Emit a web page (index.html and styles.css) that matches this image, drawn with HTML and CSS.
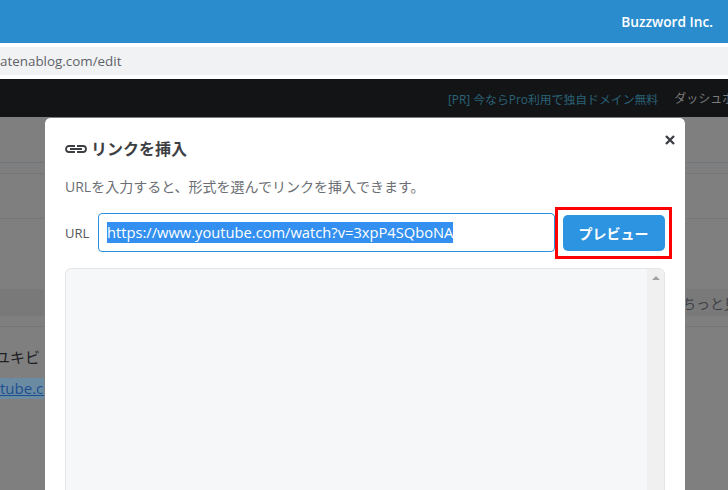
FILE: index.html
```html
<!DOCTYPE html>
<html lang="ja">
<head>
<meta charset="utf-8">
<title>リンクを挿入</title>
<link rel="stylesheet" href="styles.css">
</head>
<body>
<header class="site-bar"><span class="brand">Buzzword Inc.</span></header>
<div class="address-bar"><span class="address">atenablog.com/edit</span></div>
<nav class="admin-bar">
  <a class="promo">[PR] 今ならPro利用で独自ドメイン無料</a>
  <a class="dash">ダッシュボード</a>
</nav>
<main class="backdrop">
  <div class="rule rule-a"></div>
  <div class="rule rule-b"></div>
  <div class="rule rule-c"></div>
  <div class="band"><span class="band-text">ちっと見る</span></div>
  <p class="back-line">ユキビ</p>
  <p class="back-link"><span class="back-selected">tube.com</span></p>
</main>
<section class="modal">
  <button class="close" aria-label="閉じる">
    <svg viewBox="0 0 12 12" width="12" height="12"><path d="M2 2 L10 10 M10 2 L2 10" stroke="#3d3f44" stroke-width="2.4" fill="none"/></svg>
  </button>
  <h2 class="title">
    <svg class="link-icon" viewBox="0 0 22 8" width="22" height="8"><path d="M10 1 H4 a3 3 0 0 0 0 6 H10 M12 1 H18 a3 3 0 0 1 0 6 H12 M5 4 H17" stroke="#3d3f44" stroke-width="1.8" fill="none"/></svg>
    リンクを挿入
  </h2>
  <p class="lead">URLを入力すると、形式を選んでリンクを挿入できます。</p>
  <div class="url-row">
    <label class="url-label">URL</label>
    <div class="url-input"><span class="url-value">https://www.youtube.com/watch?v=3xpP4SQboNA</span></div>
    <div class="highlight"><button class="preview">プレビュー</button></div>
  </div>
  <div class="result">
    <div class="scrollbar"><span class="arrow"></span></div>
  </div>
</section>
</body>
</html>
```
FILE: styles.css
```css
* { box-sizing: border-box; }
html, body { margin: 0; height: 490px; overflow: hidden; }
body {
  position: relative;
  background: #fff;
  font-family: "Open Sans", "Noto Sans CJK JP", sans-serif;
  color: #3d3f44;
}
.site-bar {
  height: 43px;
  background: #2a8ccc;
  display: flex;
  align-items: center;
  justify-content: flex-end;
  padding-right: 15px;
}
.brand { color: #fff; font-size: 13.7px; font-weight: 600; }
.address-bar {
  height: 28px;
  margin: 4px 0;
  background: #f1f2f4;
  display: flex;
  align-items: center;
  overflow: hidden;
}
.address { font-size: 13.4px; color: #5f6368; }
.admin-bar {
  height: 38px;
  background: #131416;
  display: flex;
  align-items: center;
  white-space: nowrap;
  font-size: 12px;
  overflow: hidden;
}
.promo { color: #2a6378; margin-left: 448px; flex: none; font-size: 11.85px; }
.dash { color: #7d7d7d; margin-left: 16px; flex: none; }
.backdrop {
  height: 373px;
  background: #7f7f7f;
  display: flex;
  flex-direction: column;
}
.rule { height: 1px; background: #6f767b; flex: none; }
.rule-a { margin-top: 45px; }
.rule-b { margin-top: 10px; background: #737577; }
.rule-c { margin-top: 44px; background: #737577; }
.band {
  margin-top: 70px;
  height: 27px;
  background: #797979;
  display: flex;
  align-items: center;
  padding-left: 682px;
  font-size: 14px;
  color: #3e4147;
  white-space: nowrap;
  flex: none;
}
.band-text { flex: none; }
.back-line {
  margin: 10px 0 0;
  padding-top: 20px;
  border-top: 1px solid #747676;
  font-size: 15px;
  line-height: 20px;
  color: #202124;
  text-indent: -5px;
}
.back-link { margin: 11px 0 0; font-size: 15px; line-height: 21px; }
.back-selected {
  display: inline-block;
  background: #6b8ba3;
  color: #1d4f8f;
  text-decoration: underline;
}
.modal {
  position: absolute;
  left: 44px;
  top: 117px;
  width: 642px;
  height: 420px;
  background: #fff;
  background-clip: padding-box;
  border: 1px solid #7f7f7f;
  border-radius: 6px 6px 0 0;
  padding: 19px 20px 0;
}
.close {
  position: absolute;
  right: 9px;
  top: 16px;
  width: 12px;
  height: 12px;
  padding: 0;
  border: 0;
  background: none;
  line-height: 0;
}
.title {
  margin: 0;
  font-size: 16px;
  line-height: 24px;
  font-weight: 700;
  color: #3d3f44;
  display: flex;
  align-items: center;
  gap: 4px;
}
.link-icon { flex: none; }
.lead {
  margin: 16px 0 0;
  font-size: 14px;
  line-height: 20px;
  color: #6b6e73;
}
.url-row {
  margin-top: 16px;
  display: flex;
  align-items: center;
  height: 39px;
}
.url-label { width: 33px; font-size: 13px; color: #54575c; flex: none; }
.url-input {
  width: 457px;
  height: 39px;
  flex: none;
  border: 1px solid #2b91de;
  border-radius: 4px;
  padding: 0 8px;
  display: flex;
  align-items: center;
}
.url-value {
  font-size: 14.7px;
  line-height: 21px;
  background: #3390f0;
  color: #fff;
  white-space: nowrap;
}
.highlight {
  flex: none;
  width: 117px;
  height: 52px;
  margin-top: 1px;
  border: 3px solid #f00;
  display: flex;
  align-items: center;
  justify-content: center;
}
.preview {
  width: 102px;
  height: 36px;
  border: 0;
  border-radius: 5px;
  background: #2c94e0;
  color: #fff;
  font: 700 14px "Open Sans", "Noto Sans CJK JP", sans-serif;
}
.result {
  margin-top: 16px;
  width: 600px;
  height: 260px;
  background: #f6f7f9;
  border: 1px solid #e3e6e8;
  border-radius: 6px 6px 0 0;
  display: flex;
  justify-content: flex-end;
}
.scrollbar {
  width: 17px;
  background: #f0f0f0;
  border-radius: 0 5px 0 0;
  display: flex;
  justify-content: center;
  padding-top: 7px;
}
.arrow {
  width: 0;
  height: 0;
  border-left: 4px solid transparent;
  border-right: 4px solid transparent;
  border-bottom: 4px solid #a3a3a3;
}
```
